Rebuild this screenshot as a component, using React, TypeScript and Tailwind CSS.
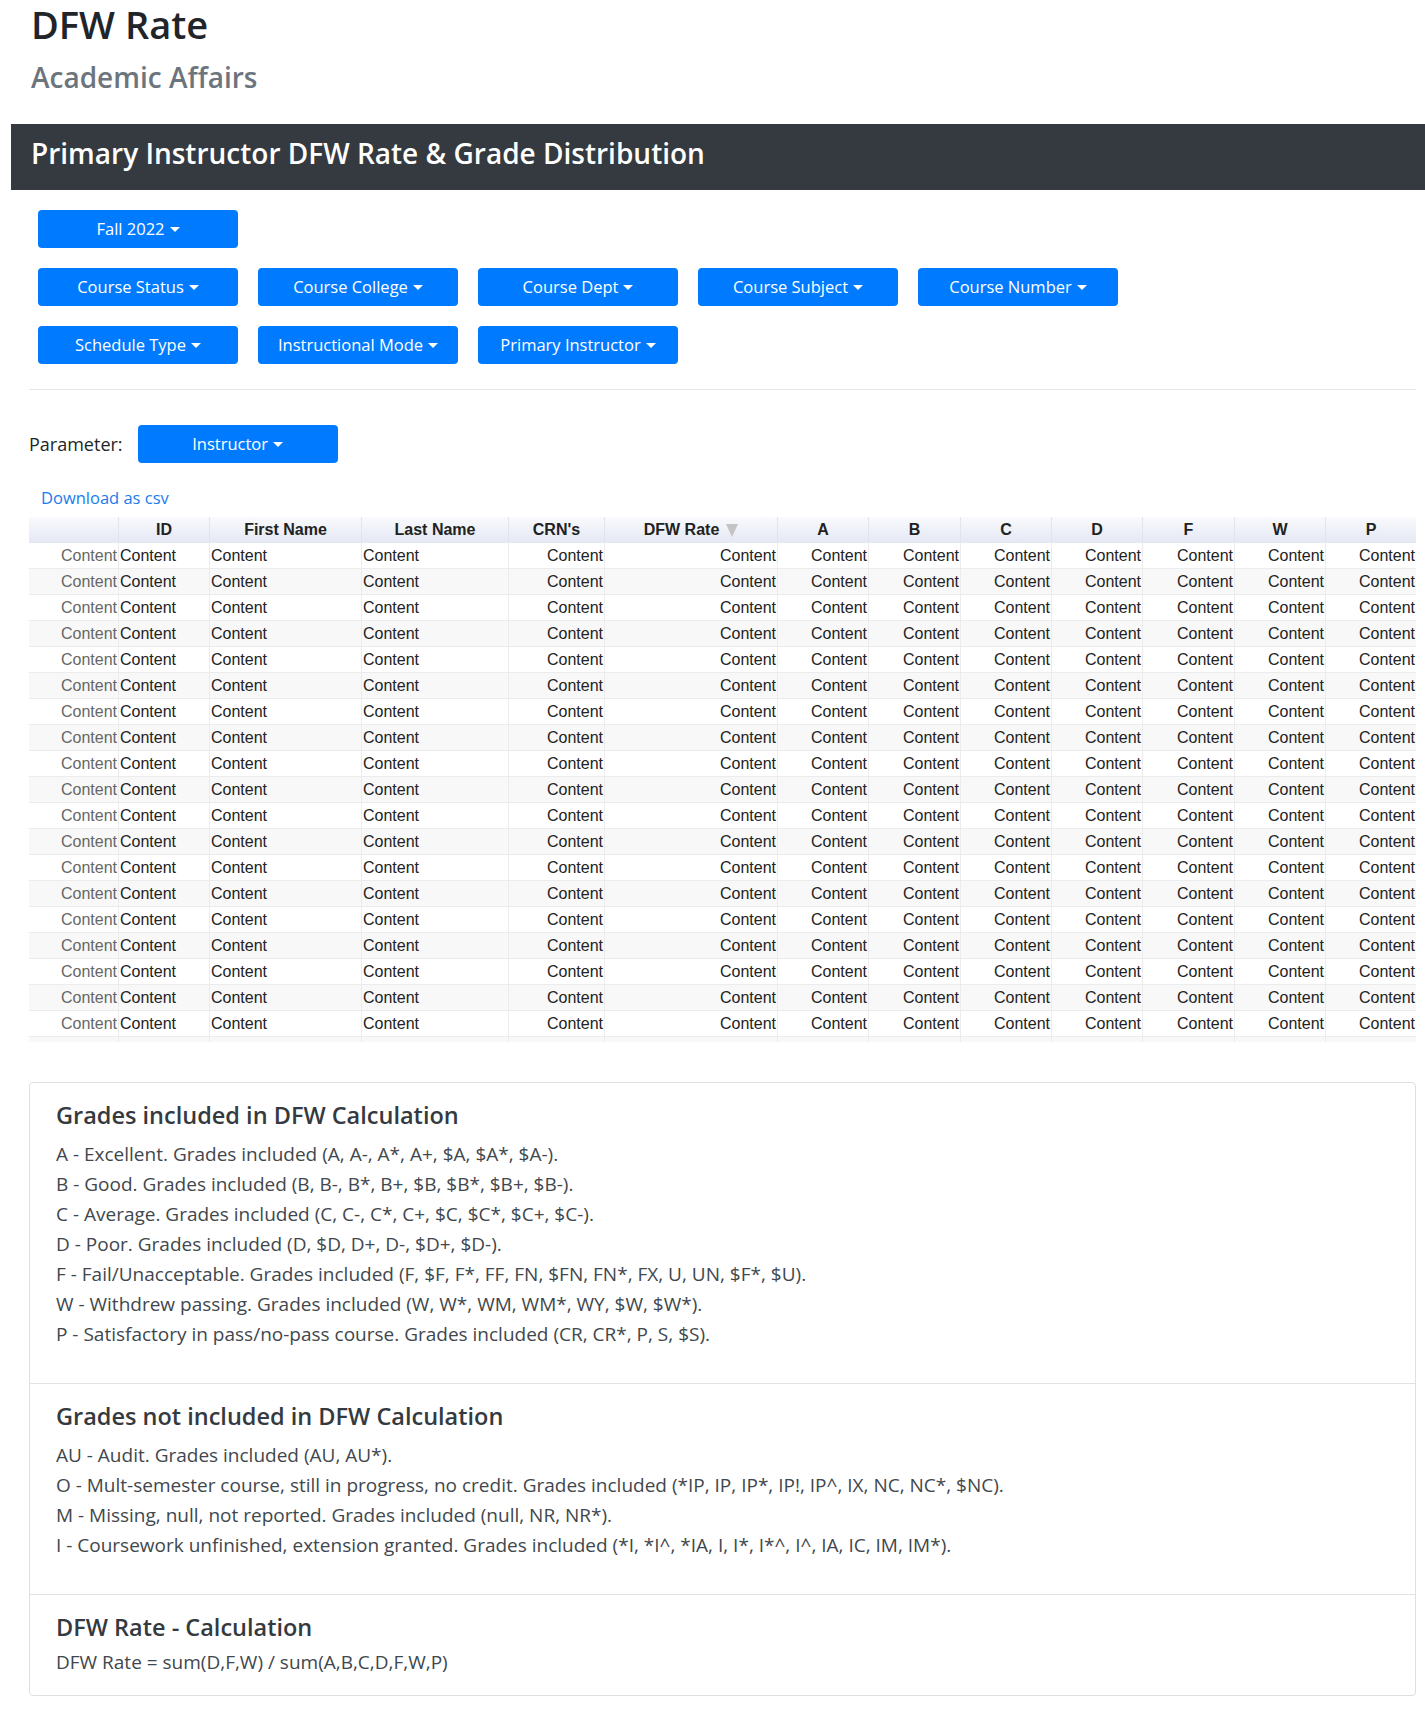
import React from 'react';

const filterRows: string[][] = [
  ['Fall 2022'],
  ['Course Status', 'Course College', 'Course Dept', 'Course Subject', 'Course Number'],
  ['Schedule Type', 'Instructional Mode', 'Primary Instructor'],
];

// column widths add up to the table width (1387px)
const columns = [
  { label: '', width: 90, align: 'text-right', muted: true },
  { label: 'ID', width: 91, align: 'text-left' },
  { label: 'First Name', width: 152, align: 'text-left' },
  { label: 'Last Name', width: 147, align: 'text-left' },
  { label: "CRN's", width: 96, align: 'text-right' },
  { label: 'DFW Rate', width: 173, align: 'text-right', sorted: true },
  { label: 'A', width: 91, align: 'text-right' },
  { label: 'B', width: 92, align: 'text-right' },
  { label: 'C', width: 91, align: 'text-right' },
  { label: 'D', width: 91, align: 'text-right' },
  { label: 'F', width: 92, align: 'text-right' },
  { label: 'W', width: 91, align: 'text-right' },
  { label: 'P', width: 90, align: 'text-right' },
];

// 19 full rows, the 20th only peeks out under the scroll edge
const rows = Array.from({ length: 20 }, (_, i) => i);

const included = [
  'A - Excellent. Grades included (A, A-, A*, A+, $A, $A*, $A-).',
  'B - Good. Grades included (B, B-, B*, B+, $B, $B*, $B+, $B-).',
  'C - Average. Grades included (C, C-, C*, C+, $C, $C*, $C+, $C-).',
  'D - Poor. Grades included (D, $D, D+, D-, $D+, $D-).',
  'F - Fail/Unacceptable. Grades included (F, $F, F*, FF, FN, $FN, FN*, FX, U, UN, $F*, $U).',
  'W - Withdrew passing. Grades included (W, W*, WM, WM*, WY, $W, $W*).',
  'P - Satisfactory in pass/no-pass course. Grades included (CR, CR*, P, S, $S).',
];

const notIncluded = [
  'AU - Audit. Grades included (AU, AU*).',
  'O - Mult-semester course, still in progress, no credit. Grades included (*IP, IP, IP*, IP!, IP^, IX, NC, NC*, $NC).',
  'M - Missing, null, not reported. Grades included (null, NR, NR*).',
  'I - Coursework unfinished, extension granted. Grades included (*I, *I^, *IA, I, I*, I*^, I^, IA, IC, IM, IM*).',
];

function Caret() {
  return <span className="ml-[5px] inline-block h-0 w-0 border-x-[5px] border-t-[5px] border-x-transparent border-t-white align-[3px]" />;
}

function DropButton({ label }: { label: string }) {
  return (
    <button className="flex h-[38px] w-[200px] items-center justify-center rounded-[4px] bg-[#007bff] text-[16.5px] text-white">
      {label}
      <Caret />
    </button>
  );
}

function GradeSection({ title, items, last }: { title: string; items: string[]; last?: boolean }) {
  return (
    <div className={last ? 'px-[26px] pt-[17px] pb-[18px]' : 'border-b border-[#e2e2e2] px-[26px] pt-[17px] pb-[34px]'}>
      <h4 className={`${last ? 'mb-[5px]' : 'mb-[9px]'} text-[23.5px] leading-[30px] font-semibold text-[#343a40]`}>{title}</h4>
      {items.map((t) => (
        <p key={t} className="text-[19px] leading-[30px] text-[#41474d]">
          {t}
        </p>
      ))}
    </div>
  );
}

export default function App() {
  return (
    <div className="min-h-[1726px] bg-white font-['Open_Sans',sans-serif] text-[#212529]">
      {/* page header */}
      <div className="pl-[31px]">
        <h1 className="text-[38px] leading-[48px] font-semibold text-[#212529]">DFW Rate</h1>
        <h3 className="mt-[12px] text-[28px] leading-[34px] font-semibold text-[#6c757d]">Academic Affairs</h3>
      </div>

      <div className="mt-[30px] ml-[11px] h-[66px] bg-[#343a40] pt-[12px] pl-[20px]">
        <h2 className="text-[28px] leading-[34px] font-semibold text-white">
          Primary Instructor DFW Rate &amp; Grade Distribution
        </h2>
      </div>

      {/* filters */}
      <div className="mt-[20px] flex flex-col gap-[20px] pl-[38px]">
        {filterRows.map((row, i) => (
          <div key={i} className="flex gap-[20px]">
            {row.map((label) => (
              <DropButton key={label} label={label} />
            ))}
          </div>
        ))}
      </div>

      <div className="mt-[25px] ml-[29px] mr-[9px] border-t border-[#e6e6e6]" />

      <div className="mt-[35px] flex items-center gap-[15px] pl-[29px]">
        <span className="text-[18px] text-[#212529]">Parameter:</span>
        <DropButton label="Instructor" />
      </div>

      <div className="mt-[23px] pl-[41px] text-[16.5px] leading-[24px] text-[#1a7cf0]">Download as csv</div>

      {/* data table */}
      <div className="mt-[7px] ml-[29px] mr-[9px] h-[525px] overflow-hidden font-['Liberation_Sans',Arial,sans-serif] text-[16px]">
        <div className="flex h-[26px] bg-gradient-to-b from-[#f9fafd] to-[#e4e8f3] font-bold text-[#222]">
          {columns.map((c, i) => (
            <div
              key={i}
              style={{ width: c.width }}
              className="flex shrink-0 items-center justify-center border-r border-[#e3e5ec] leading-[26px] last:border-r-0"
            >
              {c.label}
              {c.sorted && (
                <span className="ml-[7px] inline-block h-0 w-0 border-x-[6px] border-t-[13px] border-x-transparent border-t-[#c4c4c4]" />
              )}
            </div>
          ))}
        </div>
        {rows.map((r) => (
          <div key={r} className={`flex h-[26px] border-b border-[#ececec] ${r % 2 === 1 ? 'bg-[#f8f8f8]' : 'bg-white'}`}>
            {columns.map((c, i) => (
              <div
                key={i}
                style={{ width: c.width }}
                className={`shrink-0 border-r border-[#ececec] px-[1px] leading-[25px] last:border-r-0 ${c.align} ${c.muted ? 'text-[#666]' : 'text-[#222]'}`}
              >
                {r < 19 ? 'Content' : ''}
              </div>
            ))}
          </div>
        ))}
      </div>

      {/* grade legend */}
      <div className="mt-[40px] ml-[29px] mr-[9px] rounded-[4px] border border-[#dfdfdf]">
        <GradeSection title="Grades included in DFW Calculation" items={included} />
        <GradeSection title="Grades not included in DFW Calculation" items={notIncluded} />
        <GradeSection title="DFW Rate - Calculation" items={['DFW Rate = sum(D,F,W) / sum(A,B,C,D,F,W,P)']} last />
      </div>
    </div>
  );
}
